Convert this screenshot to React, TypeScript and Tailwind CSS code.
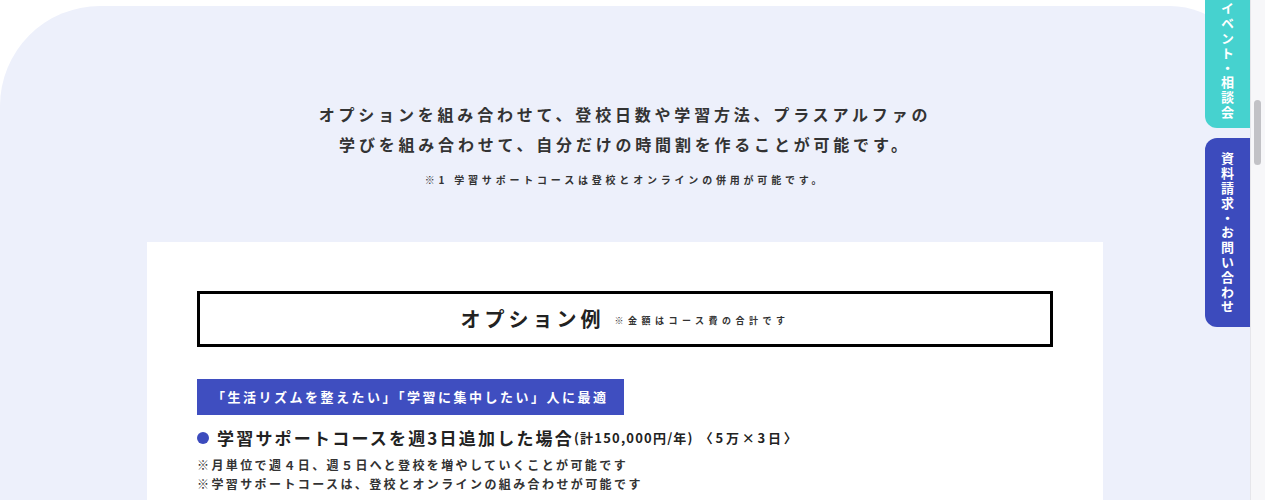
import React from "react";

const jp = "font-['Noto_Sans_CJK_JP','Noto_Sans',sans-serif]";

function SideTabs() {
  return (
    <div className="absolute right-0 top-0 flex flex-col gap-[10px] -mt-[12px]">
      <a className="flex w-[45px] items-center rounded-bl-[12px] bg-[#46d2cf] pb-[8px] pt-[14px] text-[13px] font-bold leading-none tracking-[1.8px] text-white [writing-mode:vertical-rl]">
        イベント・相談会
      </a>
      <a className="flex w-[45px] items-center rounded-l-[12px] bg-[#3c4bbd] pb-[12px] pt-[14px] text-[13px] font-bold leading-none tracking-[1.8px] text-white [writing-mode:vertical-rl]">
        資料請求・お問い合わせ
      </a>
    </div>
  );
}

function Scrollbar() {
  return (
    <div className="w-[15px] shrink-0 border-l border-[#e6e6ea] bg-[#f7f7f9] pl-[3px] pt-[100px]">
      <div className="h-[65px] w-[7px] rounded-full bg-[#c2c2c6]" />
    </div>
  );
}

export default function App() {
  return (
    <div className={`${jp} flex h-[500px] w-full overflow-hidden bg-white text-[#333]`}>
      <div className="relative flex-1 pt-[6px]">
        <section className="h-full rounded-tl-[100px] rounded-tr-[80px] bg-[#edf0fb] pt-[93px]">
          <p className="text-center text-[16px] font-bold leading-[30px] tracking-[3.8px]">
            オプションを組み合わせて、登校日数や学習方法、プラスアルファの
            <br />
            学びを組み合わせて、自分だけの時間割を作ることが可能です。
          </p>
          <p className="mt-[16px] text-center text-[10px] font-bold leading-none tracking-[3.8px]">
            ※1 学習サポートコースは登校とオンラインの併用が可能です。
          </p>

          <div className="mx-auto mt-[57px] w-[956px] bg-white px-[50px] pb-[40px] pt-[49px]">
            <div className="flex h-[56px] items-center justify-center border-[3px] border-black">
              <h3 className="text-[20px] font-bold tracking-[4px] text-[#222]">オプション例</h3>
              <span className="ml-[10px] mt-[4px] text-[9px] font-bold tracking-[4.5px]">
                ※金額はコース費の合計です
              </span>
            </div>

            <div className="mt-[32px] inline-flex h-[36px] items-center bg-[#3f4ec0] px-[15px] text-[13px] font-bold tracking-[2.5px] text-white">
              「生活リズムを整えたい」「学習に集中したい」人に最適
            </div>

            <div className="mt-[10px] flex items-center">
              <span className="h-[12px] w-[12px] rounded-full bg-[#3c4bbd]" />
              <span className="ml-[8px] text-[17px] font-bold tracking-[2.2px] text-[#222]">
                学習サポートコースを週3日追加した場合
              </span>
              <span className="text-[13px] font-bold tracking-[1.2px] text-[#222]">(計150,000円/年)</span>
              <span className="ml-[6px] text-[13px] font-bold tracking-[2.8px] text-[#222]">〈5万×3日〉</span>
            </div>

            <div className="mt-[4px] text-[12px] font-bold leading-[19px] tracking-[2.4px]">
              <p>※月単位で週４日、週５日へと登校を増やしていくことが可能です</p>
              <p>※学習サポートコースは、登校とオンラインの組み合わせが可能です</p>
            </div>
          </div>
        </section>
        <SideTabs />
      </div>
      <Scrollbar />
    </div>
  );
}
